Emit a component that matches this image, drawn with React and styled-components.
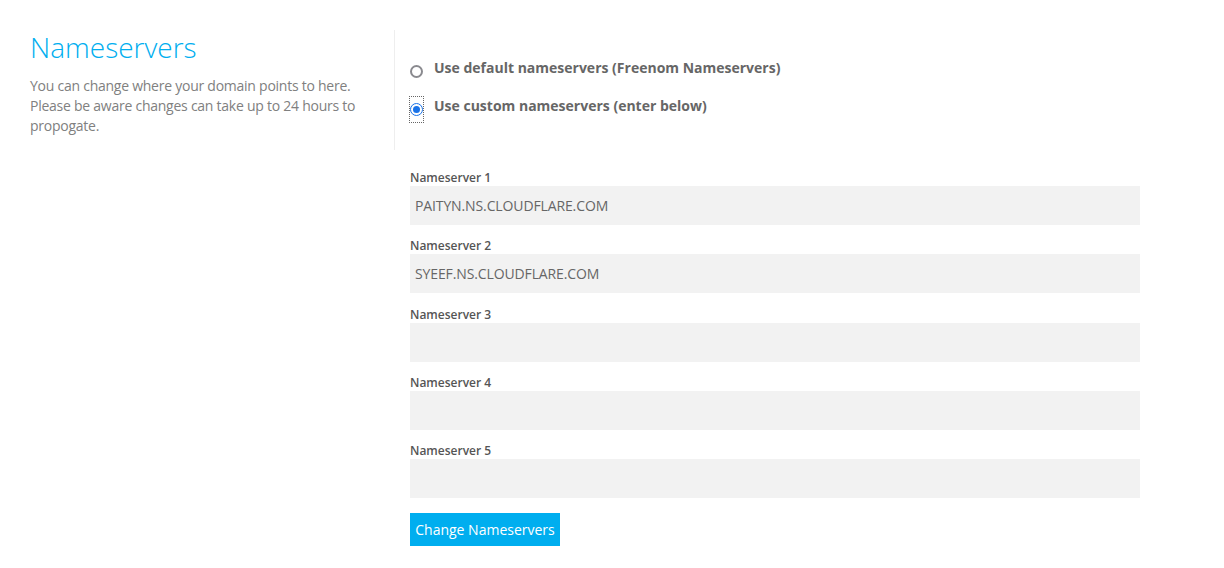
import styled, { createGlobalStyle } from "styled-components"

const GlobalStyle = createGlobalStyle`
    body {
        margin: 0;
        background: #fff;
        font-family: "Open Sans", "Liberation Sans", sans-serif;
    }
`;

const Page = styled.div`
    display: grid;
    grid-template-columns: 365px 745px;
    padding: 30px 0 0 30px;
`;

const Info = styled.div`
    height: 120px;
    border-right: 1px solid #eeeeee;
`;

const Title = styled.h1`
    margin: 0;
    font-size: 28px;
    font-weight: 300;
    line-height: 34px;
    color: #00aeef;
`;

const Description = styled.p`
    margin: 12px 0 0;
    width: 340px;
    font-size: 14px;
    letter-spacing: -0.25px;
    line-height: 20px;
    color: #808080;
`;

const Options = styled.div`
    display: flex;
    flex-direction: column;
    gap: 18px;
    padding: 28px 0 0 15px;
`;

const Option = styled.label`
    display: flex;
    align-items: center;
    gap: 11px;
    height: 20px;
    font-size: 14px;
    font-weight: 700;
    line-height: 20px;
    color: #666666;
`;

const RadioBox = styled.span`
    display: flex;
    justify-content: center;
    align-items: center;
    width: 13px;
    height: 25px;
    margin-top: 6px;
    outline: ${(props) => (props.$focused ? "1px dotted #666" : "none")};
`;

const Radio = styled.span`
    position: relative;
    width: 13px;
    height: 13px;
    box-sizing: border-box;
    border-radius: 50%;
    border: ${(props) => (props.$checked ? "1.5px solid #1a73e8" : "2px solid #8a8a8f")};
    &::after {
        content: "";
        display: ${(props) => (props.$checked ? "block" : "none")};
        position: absolute;
        inset: 2px;
        border-radius: 50%;
        background: #1a73e8;
    }
`;

const Form = styled.form`
    grid-column: 2;
    display: flex;
    flex-direction: column;
    padding: 19px 0 0 15px;
`;

const Field = styled.div`
    display: flex;
    flex-direction: column;
    margin-bottom: 12.25px;
`;

const Label = styled.span`
    font-size: 12px;
    font-weight: 600;
    line-height: 17px;
    color: #555555;
`;

const Input = styled.div`
    height: 39px;
    display: flex;
    align-items: center;
    padding-left: 5px;
    background: #f2f2f2;
    font-size: 14px;
    letter-spacing: -0.12px;
    color: #666666;
`;

const Btn = styled.button`
    align-self: flex-start;
    margin-top: 3px;
    width: 150px;
    height: 33px;
    padding: 0;
    border: none;
    background: #00aeef;
    color: #ffffff;
    font-family: inherit;
    font-size: 14px;
`;

const servers = [
    "PAITYN.NS.CLOUDFLARE.COM",
    "SYEEF.NS.CLOUDFLARE.COM",
    "",
    "",
    "",
];

export default function App() {
    return (
        <>
            <GlobalStyle />
            <Page>
                <Info>
                    <Title>Nameservers</Title>
                    <Description>
                        You can change where your domain points to here. Please be aware changes can take up to 24 hours to propogate.
                    </Description>
                </Info>
                <Options>
                    <Option>
                        <RadioBox>
                            <Radio />
                        </RadioBox>
                        Use default nameservers (Freenom Nameservers)
                    </Option>
                    <Option>
                        <RadioBox $focused>
                            <Radio $checked />
                        </RadioBox>
                        Use custom nameservers (enter below)
                    </Option>
                </Options>
                <Form>
                    {servers.map((value, i) => (
                        <Field key={i}>
                            <Label>Nameserver {i + 1}</Label>
                            <Input>{value}</Input>
                        </Field>
                    ))}
                    <Btn type="button">Change Nameservers</Btn>
                </Form>
            </Page>
        </>
    )
}
